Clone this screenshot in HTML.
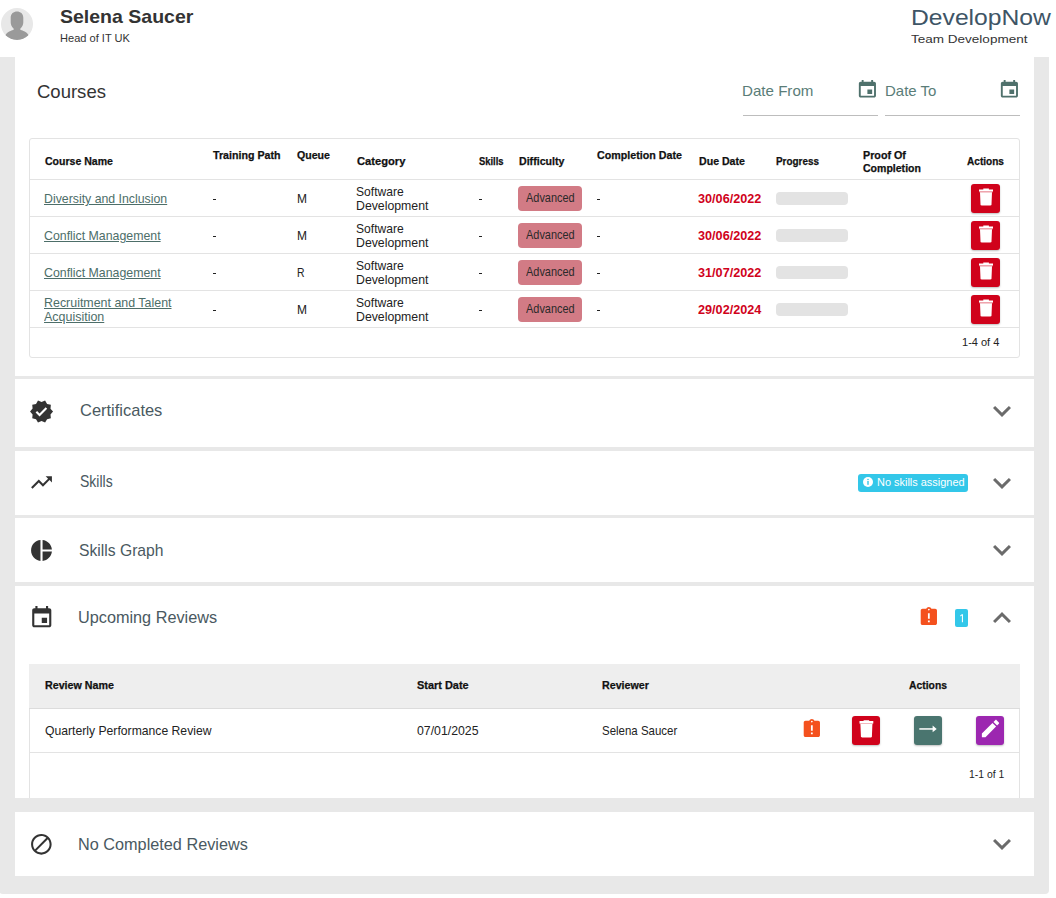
<!DOCTYPE html>
<html><head><meta charset="utf-8">
<style>
*{box-sizing:border-box;margin:0;padding:0}
html,body{width:1056px;height:898px;overflow:hidden;background:#fff;font-family:"Liberation Sans",sans-serif;color:#222}
.a{position:absolute}
.t{position:absolute;white-space:nowrap;transform-origin:0 0}
</style></head><body>

<svg class="a" style="left:0px;top:7px" width="34" height="34" viewBox="0 0 34 34">
<defs><clipPath id="cc"><circle cx="17" cy="17" r="16"/></clipPath></defs>
<circle cx="17" cy="17" r="16" fill="#e8e8e8"/>
<g clip-path="url(#cc)" fill="#9a9a9a">
<path d="M17 4.6c-3.4 0-6.3 2.2-6.3 6.2v4.4c0 2.4 1.1 4.8 2.9 6.2v1.6c-4.3.8-7.6 3.2-8.5 6.1 2.9 2.6 7.3 3.9 11.9 3.9s9-1.3 11.9-3.9c-.9-2.9-4.2-5.3-8.5-6.1v-1.6c1.8-1.4 2.9-3.8 2.9-6.2v-4.4c0-4-2.9-6.2-6.3-6.2z"/>
</g></svg>
<div class="t" style="left:60.00px;top:4.97px;font-size:18.84px;line-height:23px;color:#333;font-weight:bold;transform:scaleX(1.0359);">Selena Saucer</div>
<div class="t" style="left:60.00px;top:30.88px;font-size:11.59px;line-height:14px;color:#333;transform:scaleX(0.9553);">Head of IT UK</div>
<div class="t" style="left:911.30px;top:4.31px;font-size:22.46px;line-height:27px;color:#3e5566;transform:scaleX(1.0992);">DevelopNow</div>
<div class="t" style="left:910.50px;top:31.53px;font-size:11.74px;line-height:14px;color:#333;transform:scaleX(1.1520);">Team Development</div>
<div class="a" style="left:-1px;top:57px;width:1050px;height:837px;background:#e8e8e8;border-radius:0 0 4px 4px"></div>
<div class="a" style="left:15px;top:57px;width:1019px;height:319px;background:#fff;"></div>
<div class="a" style="left:15px;top:379px;width:1019px;height:68px;background:#fff;"></div>
<div class="a" style="left:15px;top:451px;width:1019px;height:64px;background:#fff;"></div>
<div class="a" style="left:15px;top:518px;width:1019px;height:64px;background:#fff;"></div>
<div class="a" style="left:15px;top:586px;width:1019px;height:212px;background:#fff;"></div>
<div class="a" style="left:15px;top:812px;width:1019px;height:64px;background:#fff;"></div>
<div class="t" style="left:36.90px;top:79.97px;font-size:18.84px;line-height:23px;color:#333;transform:scaleX(0.9832);">Courses</div>
<div class="t" style="left:742.30px;top:82.18px;font-size:14.78px;line-height:18px;color:#5a7d78;transform:scaleX(1.0237);">Date From</div>
<div class="t" style="left:885.40px;top:81.88px;font-size:14.78px;line-height:18px;color:#5a7d78;transform:scaleX(1.0137);">Date To</div>
<div class="a" style="left:743px;top:115px;width:135px;height:1px;background:#bdbdbd;"></div>
<div class="a" style="left:885px;top:115px;width:135px;height:1px;background:#bdbdbd;"></div>
<svg class="a" style="left:855.75px;top:79.1px" width="22.8" height="21.2" viewBox="0 0 24 24" preserveAspectRatio="none"><path d="M17 12h-5v5h5v-5zM16 1v2H8V1H6v2H5c-1.11 0-1.99.9-1.99 2L3 19c0 1.1.89 2 2 2h14c1.1 0 2-.9 2-2V5c0-1.1-.9-2-2-2h-1V1h-2zm3 18H5V8h14v11z" fill="#4f716c"/></svg>
<svg class="a" style="left:998.2px;top:79.1px" width="22.8" height="21.2" viewBox="0 0 24 24" preserveAspectRatio="none"><path d="M17 12h-5v5h5v-5zM16 1v2H8V1H6v2H5c-1.11 0-1.99.9-1.99 2L3 19c0 1.1.89 2 2 2h14c1.1 0 2-.9 2-2V5c0-1.1-.9-2-2-2h-1V1h-2zm3 18H5V8h14v11z" fill="#4f716c"/></svg>
<div class="a" style="left:29px;top:138px;width:991px;height:220px;background:#fff;border:1px solid #e3e3e3;border-radius:3px"></div>
<div class="a" style="left:29px;top:179px;width:991px;height:1px;background:#e3e3e3;"></div>
<div class="a" style="left:29px;top:216px;width:991px;height:1px;background:#e3e3e3;"></div>
<div class="a" style="left:29px;top:253px;width:991px;height:1px;background:#e3e3e3;"></div>
<div class="a" style="left:29px;top:290px;width:991px;height:1px;background:#e3e3e3;"></div>
<div class="a" style="left:29px;top:327px;width:991px;height:1px;background:#e3e3e3;"></div>
<div class="t" style="left:44.70px;top:155.18px;font-size:11.01px;line-height:13px;color:#111;font-weight:bold;transform:scaleX(0.9579);-webkit-text-stroke:0.25px #111">Course Name</div>
<div class="t" style="left:212.60px;top:148.88px;font-size:11.01px;line-height:13px;color:#111;font-weight:bold;transform:scaleX(0.9688);-webkit-text-stroke:0.25px #111">Training Path</div>
<div class="t" style="left:297.40px;top:148.88px;font-size:11.01px;line-height:13px;color:#111;font-weight:bold;transform:scaleX(0.9634);-webkit-text-stroke:0.25px #111">Queue</div>
<div class="t" style="left:356.50px;top:155.18px;font-size:11.01px;line-height:13px;color:#111;font-weight:bold;transform:scaleX(1.0158);-webkit-text-stroke:0.25px #111">Category</div>
<div class="t" style="left:478.90px;top:155.18px;font-size:11.01px;line-height:13px;color:#111;font-weight:bold;transform:scaleX(0.8541);-webkit-text-stroke:0.25px #111">Skills</div>
<div class="t" style="left:518.60px;top:155.18px;font-size:11.01px;line-height:13px;color:#111;font-weight:bold;transform:scaleX(0.9652);-webkit-text-stroke:0.25px #111">Difficulty</div>
<div class="t" style="left:596.60px;top:148.88px;font-size:11.01px;line-height:13px;color:#111;font-weight:bold;transform:scaleX(0.9713);-webkit-text-stroke:0.25px #111">Completion Date</div>
<div class="t" style="left:698.90px;top:155.18px;font-size:11.01px;line-height:13px;color:#111;font-weight:bold;transform:scaleX(0.9634);-webkit-text-stroke:0.25px #111">Due Date</div>
<div class="t" style="left:776.20px;top:155.18px;font-size:11.01px;line-height:13px;color:#111;font-weight:bold;transform:scaleX(0.9006);-webkit-text-stroke:0.25px #111">Progress</div>
<div class="t" style="left:862.70px;top:148.68px;font-size:11.01px;line-height:13px;color:#111;font-weight:bold;transform:scaleX(0.9760);-webkit-text-stroke:0.25px #111">Proof Of</div>
<div class="t" style="left:862.70px;top:161.78px;font-size:11.01px;line-height:13px;color:#111;font-weight:bold;transform:scaleX(0.9574);-webkit-text-stroke:0.25px #111">Completion</div>
<div class="t" style="left:966.90px;top:154.98px;font-size:11.01px;line-height:13px;color:#111;font-weight:bold;transform:scaleX(0.9166);-webkit-text-stroke:0.25px #111">Actions</div>
<div class="t" style="left:44.20px;top:192.18px;font-size:12.46px;line-height:15px;color:#4d6e69;transform:scaleX(0.9888);text-decoration:underline;text-underline-offset:1px">Diversity and Inclusion</div>
<div class="a" style="left:213px;top:199px;width:3px;height:1px;background:#222;"></div>
<div class="t" style="left:297.40px;top:192.18px;font-size:12.46px;line-height:15px;color:#222;transform:scaleX(0.9609);">M</div>
<div class="t" style="left:356.30px;top:184.58px;font-size:12.46px;line-height:15px;color:#222;transform:scaleX(0.9701);">Software</div>
<div class="t" style="left:356.30px;top:198.58px;font-size:12.46px;line-height:15px;color:#222;transform:scaleX(0.9876);">Development</div>
<div class="a" style="left:479px;top:199px;width:3px;height:1px;background:#222;"></div>
<div class="a" style="left:518px;top:186px;width:64px;height:24.5px;background:#d27b85;border-radius:4px"></div>
<div class="t" style="left:525.60px;top:190.78px;font-size:12.17px;line-height:15px;color:#2a2a2a;transform:scaleX(0.9008);">Advanced</div>
<div class="a" style="left:597px;top:199px;width:3px;height:1px;background:#222;"></div>
<div class="t" style="left:698.20px;top:192.18px;font-size:12.46px;line-height:15px;color:#d0021b;font-weight:bold;transform:scaleX(1.0163);">30/06/2022</div>
<div class="a" style="left:776px;top:192px;width:72px;height:13px;background:#e3e3e3;border-radius:4px"></div>
<div class="a" style="left:971px;top:184px;width:29px;height:29px;background:#d0021b;border-radius:3px;box-shadow:0 1px 2px rgba(0,0,0,.25)"></div>
<svg class="a" style="left:971px;top:184px" width="29" height="29" viewBox="0 0 29 29"><path d="M12.3 4.5h5.6v1h-5.6z M8 5.4h14v2.2H8z" fill="#fff"/><path d="M9 8.3h12l-.5 12.2c0 .6-.5.9-1 .9h-9c-.5 0-1-.3-1-.9z" fill="#fff"/><rect x="8.3" y="7.6" width="13.4" height=".7" fill="#fff" opacity=".7"/></svg>
<div class="t" style="left:44.20px;top:229.18px;font-size:12.46px;line-height:15px;color:#4d6e69;transform:scaleX(0.9908);text-decoration:underline;text-underline-offset:1px">Conflict Management</div>
<div class="a" style="left:213px;top:236px;width:3px;height:1px;background:#222;"></div>
<div class="t" style="left:297.40px;top:229.18px;font-size:12.46px;line-height:15px;color:#222;transform:scaleX(0.9609);">M</div>
<div class="t" style="left:356.30px;top:221.58px;font-size:12.46px;line-height:15px;color:#222;transform:scaleX(0.9701);">Software</div>
<div class="t" style="left:356.30px;top:235.58px;font-size:12.46px;line-height:15px;color:#222;transform:scaleX(0.9876);">Development</div>
<div class="a" style="left:479px;top:236px;width:3px;height:1px;background:#222;"></div>
<div class="a" style="left:518px;top:223px;width:64px;height:24.5px;background:#d27b85;border-radius:4px"></div>
<div class="t" style="left:525.60px;top:227.78px;font-size:12.17px;line-height:15px;color:#2a2a2a;transform:scaleX(0.9008);">Advanced</div>
<div class="a" style="left:597px;top:236px;width:3px;height:1px;background:#222;"></div>
<div class="t" style="left:698.20px;top:229.18px;font-size:12.46px;line-height:15px;color:#d0021b;font-weight:bold;transform:scaleX(1.0163);">30/06/2022</div>
<div class="a" style="left:776px;top:229px;width:72px;height:13px;background:#e3e3e3;border-radius:4px"></div>
<div class="a" style="left:971px;top:221px;width:29px;height:29px;background:#d0021b;border-radius:3px;box-shadow:0 1px 2px rgba(0,0,0,.25)"></div>
<svg class="a" style="left:971px;top:221px" width="29" height="29" viewBox="0 0 29 29"><path d="M12.3 4.5h5.6v1h-5.6z M8 5.4h14v2.2H8z" fill="#fff"/><path d="M9 8.3h12l-.5 12.2c0 .6-.5.9-1 .9h-9c-.5 0-1-.3-1-.9z" fill="#fff"/><rect x="8.3" y="7.6" width="13.4" height=".7" fill="#fff" opacity=".7"/></svg>
<div class="t" style="left:44.20px;top:266.18px;font-size:12.46px;line-height:15px;color:#4d6e69;transform:scaleX(0.9908);text-decoration:underline;text-underline-offset:1px">Conflict Management</div>
<div class="a" style="left:213px;top:273px;width:3px;height:1px;background:#222;"></div>
<div class="t" style="left:297.40px;top:266.18px;font-size:12.46px;line-height:15px;color:#222;transform:scaleX(0.8358);">R</div>
<div class="t" style="left:356.30px;top:258.58px;font-size:12.46px;line-height:15px;color:#222;transform:scaleX(0.9701);">Software</div>
<div class="t" style="left:356.30px;top:272.58px;font-size:12.46px;line-height:15px;color:#222;transform:scaleX(0.9876);">Development</div>
<div class="a" style="left:479px;top:273px;width:3px;height:1px;background:#222;"></div>
<div class="a" style="left:518px;top:260px;width:64px;height:24.5px;background:#d27b85;border-radius:4px"></div>
<div class="t" style="left:525.60px;top:264.78px;font-size:12.17px;line-height:15px;color:#2a2a2a;transform:scaleX(0.9008);">Advanced</div>
<div class="a" style="left:597px;top:273px;width:3px;height:1px;background:#222;"></div>
<div class="t" style="left:698.20px;top:266.18px;font-size:12.46px;line-height:15px;color:#d0021b;font-weight:bold;transform:scaleX(1.0163);">31/07/2022</div>
<div class="a" style="left:776px;top:266px;width:72px;height:13px;background:#e3e3e3;border-radius:4px"></div>
<div class="a" style="left:971px;top:258px;width:29px;height:29px;background:#d0021b;border-radius:3px;box-shadow:0 1px 2px rgba(0,0,0,.25)"></div>
<svg class="a" style="left:971px;top:258px" width="29" height="29" viewBox="0 0 29 29"><path d="M12.3 4.5h5.6v1h-5.6z M8 5.4h14v2.2H8z" fill="#fff"/><path d="M9 8.3h12l-.5 12.2c0 .6-.5.9-1 .9h-9c-.5 0-1-.3-1-.9z" fill="#fff"/><rect x="8.3" y="7.6" width="13.4" height=".7" fill="#fff" opacity=".7"/></svg>
<div class="t" style="left:44.20px;top:295.58px;font-size:12.46px;line-height:15px;color:#4d6e69;transform:scaleX(0.9973);text-decoration:underline;text-underline-offset:1px">Recruitment and Talent</div>
<div class="t" style="left:44.20px;top:309.78px;font-size:12.46px;line-height:15px;color:#4d6e69;transform:scaleX(1.0006);text-decoration:underline;text-underline-offset:1px">Acquisition</div>
<div class="a" style="left:213px;top:310px;width:3px;height:1px;background:#222;"></div>
<div class="t" style="left:297.40px;top:303.18px;font-size:12.46px;line-height:15px;color:#222;transform:scaleX(0.9609);">M</div>
<div class="t" style="left:356.30px;top:295.58px;font-size:12.46px;line-height:15px;color:#222;transform:scaleX(0.9701);">Software</div>
<div class="t" style="left:356.30px;top:309.58px;font-size:12.46px;line-height:15px;color:#222;transform:scaleX(0.9876);">Development</div>
<div class="a" style="left:479px;top:310px;width:3px;height:1px;background:#222;"></div>
<div class="a" style="left:518px;top:297px;width:64px;height:24.5px;background:#d27b85;border-radius:4px"></div>
<div class="t" style="left:525.60px;top:301.78px;font-size:12.17px;line-height:15px;color:#2a2a2a;transform:scaleX(0.9008);">Advanced</div>
<div class="a" style="left:597px;top:310px;width:3px;height:1px;background:#222;"></div>
<div class="t" style="left:698.20px;top:303.18px;font-size:12.46px;line-height:15px;color:#d0021b;font-weight:bold;transform:scaleX(1.0163);">29/02/2024</div>
<div class="a" style="left:776px;top:303px;width:72px;height:13px;background:#e3e3e3;border-radius:4px"></div>
<div class="a" style="left:971px;top:295px;width:29px;height:29px;background:#d0021b;border-radius:3px;box-shadow:0 1px 2px rgba(0,0,0,.25)"></div>
<svg class="a" style="left:971px;top:295px" width="29" height="29" viewBox="0 0 29 29"><path d="M12.3 4.5h5.6v1h-5.6z M8 5.4h14v2.2H8z" fill="#fff"/><path d="M9 8.3h12l-.5 12.2c0 .6-.5.9-1 .9h-9c-.5 0-1-.3-1-.9z" fill="#fff"/><rect x="8.3" y="7.6" width="13.4" height=".7" fill="#fff" opacity=".7"/></svg>
<div class="t" style="left:961.60px;top:335.18px;font-size:11.59px;line-height:14px;color:#222;transform:scaleX(0.9515);">1-4 of 4</div>
<svg class="a" style="left:28.95px;top:398.9px" width="25.1" height="25.1" viewBox="0 0 24 24"><path d="M23 12l-2.44-2.79.34-3.69-3.61-.82-1.89-3.2L12 2.96 8.6 1.5 6.71 4.69 3.1 5.5l.34 3.7L1 12l2.44 2.79-.34 3.7 3.61.82L8.6 22.5l3.4-1.47 3.4 1.46 1.89-3.19 3.61-.82-.34-3.69L23 12zm-12.91 4.72l-3.8-3.81 1.48-1.48 2.32 2.33 5.85-5.87 1.48 1.48-7.33 7.35z" fill="#333333" /></svg>
<div class="t" style="left:79.50px;top:401.37px;font-size:16.81px;line-height:20px;color:#4a5961;transform:scaleX(0.9803);">Certificates</div>
<svg class="a" style="left:984.3px;top:393.1px" width="36" height="36" viewBox="0 0 24 24"><path d="M16.59 8.59L12 13.17 7.41 8.59 6 10l6 6 6-6z" fill="#6b6b6b" /></svg>
<svg class="a" style="left:28.9px;top:469.7px" width="25" height="25" viewBox="0 0 24 24"><path d="M16 6l2.29 2.29-4.88 4.88-4-4L2 16.59 3.41 18l6-6 4 4 6.3-6.29L22 12V6z" fill="#333333" /></svg>
<div class="t" style="left:79.50px;top:472.07px;font-size:16.81px;line-height:20px;color:#4a5961;transform:scaleX(0.8330);">Skills</div>
<div class="a" style="left:858px;top:474px;width:110px;height:18px;background:#33c7e9;border-radius:3px"></div>
<svg class="a" style="left:862px;top:475.8px" width="12" height="12" viewBox="0 0 12 12"><circle cx="6" cy="6" r="5" fill="#fff"/><rect x="5.3" y="5" width="1.4" height="3.8" fill="#33c7e9"/><circle cx="6" cy="3.5" r=".8" fill="#33c7e9"/></svg>
<div class="t" style="left:876.80px;top:475.18px;font-size:11.59px;line-height:14px;color:#fff;transform:scaleX(0.9449);">No skills assigned</div>
<svg class="a" style="left:984.3px;top:465.1px" width="36" height="36" viewBox="0 0 24 24"><path d="M16.59 8.59L12 13.17 7.41 8.59 6 10l6 6 6-6z" fill="#6b6b6b" /></svg>
<svg class="a" style="left:28.9px;top:537.9px" width="25" height="25" viewBox="0 0 24 24"><path d="M11 2v20c-5.07-.5-9-4.79-9-10s3.93-9.5 9-10zm2.03 0v8.99H22c-.47-4.74-4.24-8.52-8.97-8.99zm0 11.01V22c4.74-.47 8.5-4.25 8.97-8.99h-8.97z" fill="#333333" /></svg>
<div class="t" style="left:79.30px;top:540.57px;font-size:16.81px;line-height:20px;color:#4a5961;transform:scaleX(0.9336);">Skills Graph</div>
<svg class="a" style="left:984.3px;top:532.1px" width="36" height="36" viewBox="0 0 24 24"><path d="M16.59 8.59L12 13.17 7.41 8.59 6 10l6 6 6-6z" fill="#6b6b6b" /></svg>
<svg class="a" style="left:28.8px;top:605px" width="25.5" height="25.5" viewBox="0 0 24 24"><path d="M17 12h-5v5h5v-5zM16 1v2H8V1H6v2H5c-1.11 0-1.99.9-1.99 2L3 19c0 1.1.89 2 2 2h14c1.1 0 2-.9 2-2V5c0-1.1-.9-2-2-2h-1V1h-2zm3 18H5V8h14v11z" fill="#333333" /></svg>
<div class="t" style="left:77.60px;top:607.57px;font-size:16.81px;line-height:20px;color:#4a5961;transform:scaleX(0.9673);">Upcoming Reviews</div>
<svg class="a" style="left:918px;top:605.9px" width="21.7" height="21.7" viewBox="0 0 24 24"><path d="M19 3h-4.18C14.4 1.84 13.3 1 12 1c-1.3 0-2.4.84-2.82 2H5c-1.1 0-2 .9-2 2v14c0 1.1.9 2 2 2h14c1.1 0 2-.9 2-2V5c0-1.1-.9-2-2-2zm-6 15h-2v-2h2v2zm0-4h-2V8h2v6zm-1-9c-.55 0-1-.45-1-1s.45-1 1-1 1 .45 1 1-.45 1-1 1z" fill="#f4511e" /></svg>
<div class="a" style="left:955px;top:609px;width:13px;height:18px;background:#33c7e9;border-radius:2px"></div>
<svg class="a" style="left:955px;top:609px" width="13" height="18" viewBox="0 0 13 18"><path d="M6.9 5.2h1.05v8.1H6.9V6.6L5.2 7.5V6.5z" fill="#fff"/></svg>
<svg class="a" style="left:984.3px;top:600.1px" width="36" height="36" viewBox="0 0 24 24"><path d="M12 8l-6 6 1.41 1.41L12 10.83l4.59 4.58L18 14z" fill="#6b6b6b" /></svg>
<svg class="a" style="left:29.1px;top:832.1px" width="24.7" height="24.7" viewBox="0 0 24 24"><path d="M12 2C6.48 2 2 6.48 2 12s4.48 10 10 10 10-4.48 10-10S17.52 2 12 2zM4 12c0-4.42 3.58-8 8-8 1.85 0 3.55.63 4.9 1.69L5.69 16.9C4.63 15.55 4 13.85 4 12zm8 8c-1.85 0-3.55-.63-4.9-1.69L18.31 7.1C19.37 8.45 20 10.15 20 12c0 4.42-3.58 8-8 8z" fill="#333333" /></svg>
<div class="t" style="left:77.60px;top:834.77px;font-size:16.81px;line-height:20px;color:#4a5961;transform:scaleX(0.9677);">No Completed Reviews</div>
<svg class="a" style="left:984.3px;top:826.1px" width="36" height="36" viewBox="0 0 24 24"><path d="M16.59 8.59L12 13.17 7.41 8.59 6 10l6 6 6-6z" fill="#6b6b6b" /></svg>
<div class="a" style="left:29px;top:664px;width:991px;height:134px;background:#fff;border-left:1px solid #e3e3e3;border-right:1px solid #e3e3e3"></div>
<div class="a" style="left:29px;top:664px;width:991px;height:44px;background:#eeeeee;"></div>
<div class="a" style="left:29px;top:708px;width:991px;height:1px;background:#dcdcdc;"></div>
<div class="a" style="left:29px;top:752px;width:991px;height:1px;background:#e3e3e3;"></div>
<div class="t" style="left:44.60px;top:679.28px;font-size:11.01px;line-height:13px;color:#111;font-weight:bold;transform:scaleX(0.9712);-webkit-text-stroke:0.25px #111">Review Name</div>
<div class="t" style="left:416.50px;top:679.28px;font-size:11.01px;line-height:13px;color:#111;font-weight:bold;transform:scaleX(0.9934);-webkit-text-stroke:0.25px #111">Start Date</div>
<div class="t" style="left:601.70px;top:679.28px;font-size:11.01px;line-height:13px;color:#111;font-weight:bold;transform:scaleX(0.9720);-webkit-text-stroke:0.25px #111">Reviewer</div>
<div class="t" style="left:909.00px;top:678.98px;font-size:11.01px;line-height:13px;color:#111;font-weight:bold;transform:scaleX(0.9413);-webkit-text-stroke:0.25px #111">Actions</div>
<div class="t" style="left:44.60px;top:724.38px;font-size:12.46px;line-height:15px;color:#222;transform:scaleX(0.9780);">Quarterly Performance Review</div>
<div class="t" style="left:416.50px;top:724.38px;font-size:12.46px;line-height:15px;color:#222;transform:scaleX(0.9875);">07/01/2025</div>
<div class="t" style="left:601.70px;top:724.38px;font-size:12.46px;line-height:15px;color:#222;transform:scaleX(0.9210);">Selena Saucer</div>
<svg class="a" style="left:800.7px;top:718px" width="21.7" height="21.7" viewBox="0 0 24 24"><path d="M19 3h-4.18C14.4 1.84 13.3 1 12 1c-1.3 0-2.4.84-2.82 2H5c-1.1 0-2 .9-2 2v14c0 1.1.9 2 2 2h14c1.1 0 2-.9 2-2V5c0-1.1-.9-2-2-2zm-6 15h-2v-2h2v2zm0-4h-2V8h2v6zm-1-9c-.55 0-1-.45-1-1s.45-1 1-1 1 .45 1 1-.45 1-1 1z" fill="#f4511e" /></svg>
<div class="a" style="left:852px;top:716px;width:28px;height:29px;background:#d0021b;border-radius:3px;box-shadow:0 1px 2px rgba(0,0,0,.25)"></div>
<svg class="a" style="left:852px;top:716px" width="28" height="29" viewBox="0 0 28 29"><path d="M11.6 4.2h5.6v1h-5.6z M7.5 5.1h13.8v2.3H7.5z" fill="#fff"/><path d="M8.4 8.1h12l-.5 12.4c0 .6-.5.9-1 .9h-9c-.5 0-1-.3-1-.9z" fill="#fff"/><rect x="7.8" y="7.4" width="13.2" height=".7" fill="#fff" opacity=".7"/></svg>
<div class="a" style="left:914px;top:716px;width:28px;height:29px;background:#4a756f;border-radius:3px;box-shadow:0 1px 2px rgba(0,0,0,.25)"></div>
<svg class="a" style="left:914px;top:716px" width="28" height="29" viewBox="0 0 28 29"><path d="M5.3 12.2h14v1.5H5.3z" fill="#fff"/><path d="M18.6 9.6l4.1 3.35-4.1 3.35z" fill="#fff"/></svg>
<div class="a" style="left:976px;top:716px;width:28px;height:29px;background:#9c27b0;border-radius:3px;box-shadow:0 1px 2px rgba(0,0,0,.25)"></div>
<svg class="a" style="left:978.9px;top:717.3px" width="23" height="23" viewBox="0 0 24 24"><path d="M3 17.25V21h3.75L17.81 9.94l-3.75-3.75L3 17.25zM20.71 7.04c.39-.39.39-1.02 0-1.41l-2.34-2.34c-.39-.39-1.02-.39-1.41 0l-1.83 1.83 3.75 3.75 1.83-1.83z" fill="#fff" /></svg>
<div class="t" style="left:969.00px;top:767.28px;font-size:11.30px;line-height:14px;color:#222;transform:scaleX(0.9211);">1-1 of 1</div>
</body></html>
